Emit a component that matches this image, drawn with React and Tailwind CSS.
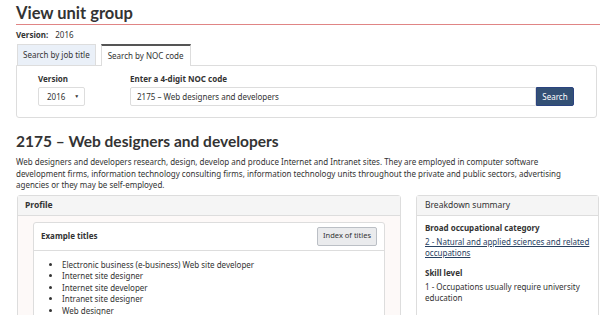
export default function App() {
  const titles = [
    "Electronic business (e-business) Web site developer",
    "Internet site designer",
    "Internet site developer",
    "Intranet site designer",
    "Web designer",
  ];

  return (
    <div className="w-[600px] h-[315px] overflow-hidden bg-white text-[#333] font-['Noto_Sans',sans-serif] text-[8px]">
      <div className="pl-[16px]">
        <h1 className="font-['Lato',sans-serif] font-bold text-[16.5px] leading-[20px] pt-[3px] pb-px text-[#333]">View unit group</h1>
        <div className="h-px bg-[#e08585]" />
        <div className="mt-[4px] leading-[11px]">
          <span className="font-bold">Version:</span>
          <span className="ml-[7px]">2016</span>
        </div>

        <div className="w-[581px] mt-[4px]">
          <div className="flex items-end h-[21px] pl-px">
            <div className="h-[21px] px-[5px] flex items-center bg-[#eaf0f8] border border-b-0 border-[#ddd]">
              Search by job title
            </div>
            <div className="h-[22px] ml-[5px] px-[6px] flex items-center bg-white border-x border-[#ddd] border-t-2 border-t-[#555] relative top-px">
              Search by NOC code
            </div>
          </div>
          <div className="border border-[#ddd] rounded-b-[3px] rounded-tr-[3px] h-[53px] flex pt-[7px]">
            <div className="ml-[21px] w-[92px]">
              <div className="font-bold leading-[11px]">Version</div>
              <div className="mt-[3px] w-[47px] h-[19px] border border-[#ddd] rounded-[2px] flex items-center pl-[8px]">
                <span>2016</span>
                <span className="ml-[9px] text-[5px]">▼</span>
              </div>
            </div>
            <div>
              <div className="font-bold leading-[11px]">Enter a 4-digit NOC code</div>
              <div className="mt-[3px] flex">
                <div className="w-[406px] h-[19px] border border-[#ddd] rounded-l-[2px] flex items-center pl-[6px]">
                  2175 – Web designers and developers
                </div>
                <div className="w-[38px] h-[19px] bg-[#335075] border border-[#2b4380] rounded-r-[2px] text-white flex items-center justify-center">
                  Search
                </div>
              </div>
            </div>
          </div>
        </div>

        <h2 className="font-['Lato',sans-serif] font-bold text-[15.5px] leading-[20px] mt-[13px]">2175 – Web designers and developers</h2>
        <p className="mt-[5px] leading-[11.5px] pr-[12px]">
          Web designers and developers research, design, develop and produce Internet and Intranet sites. They are employed in computer software development firms, information technology consulting firms, information technology units throughout the private and public sectors, advertising agencies or they may be self-employed.
        </p>

        <div className="flex mt-[4px] gap-[15px]">
          <div className="w-[384px] ml-px border border-[#ddd] rounded-t-[3px]">
            <div className="h-[20px] bg-[#f5f5f5] border-b border-[#ddd] flex items-center pl-[7px] font-bold text-[8.5px]">Profile</div>
            <div className="bg-[#fdf9f8] px-[15px] pt-[6px] h-[120px]">
              <div className="border border-[#ddd] bg-white rounded-t-[3px]">
                <div className="h-[28px] flex items-center justify-between pl-[7px] pr-[7px] border-b border-[#ddd]">
                  <span className="font-bold">Example titles</span>
                  <span className="h-[19px] px-[5px] flex items-center bg-[#eaebed] border border-[#bbbfc5] rounded-[2px] text-[7.5px]">Index of titles</span>
                </div>
                <ul className="pl-[28px] pt-[8px] list-disc">
                  {titles.map((t) => (
                    <li key={t} className="leading-[11.5px]">{t}</li>
                  ))}
                </ul>
              </div>
            </div>
          </div>

          <div className="w-[183px] border border-[#ddd] rounded-t-[3px]">
            <div className="h-[20px] bg-[#f5f5f5] border-b border-[#ddd] flex items-center pl-[8px] text-[8.5px]">Breakdown summary</div>
            <div className="px-[8px] pt-[6px]">
              <div className="font-bold leading-[12px] mb-[2px]">Broad occupational category</div>
              <a className="underline text-[#284162] leading-[11.5px] block">2 - Natural and applied sciences and related occupations</a>
              <div className="font-bold leading-[12px] mt-[8px] mb-[2px]">Skill level</div>
              <div className="leading-[11.5px]">1 - Occupations usually require university education</div>
            </div>
          </div>
        </div>
      </div>
    </div>
  );
}
